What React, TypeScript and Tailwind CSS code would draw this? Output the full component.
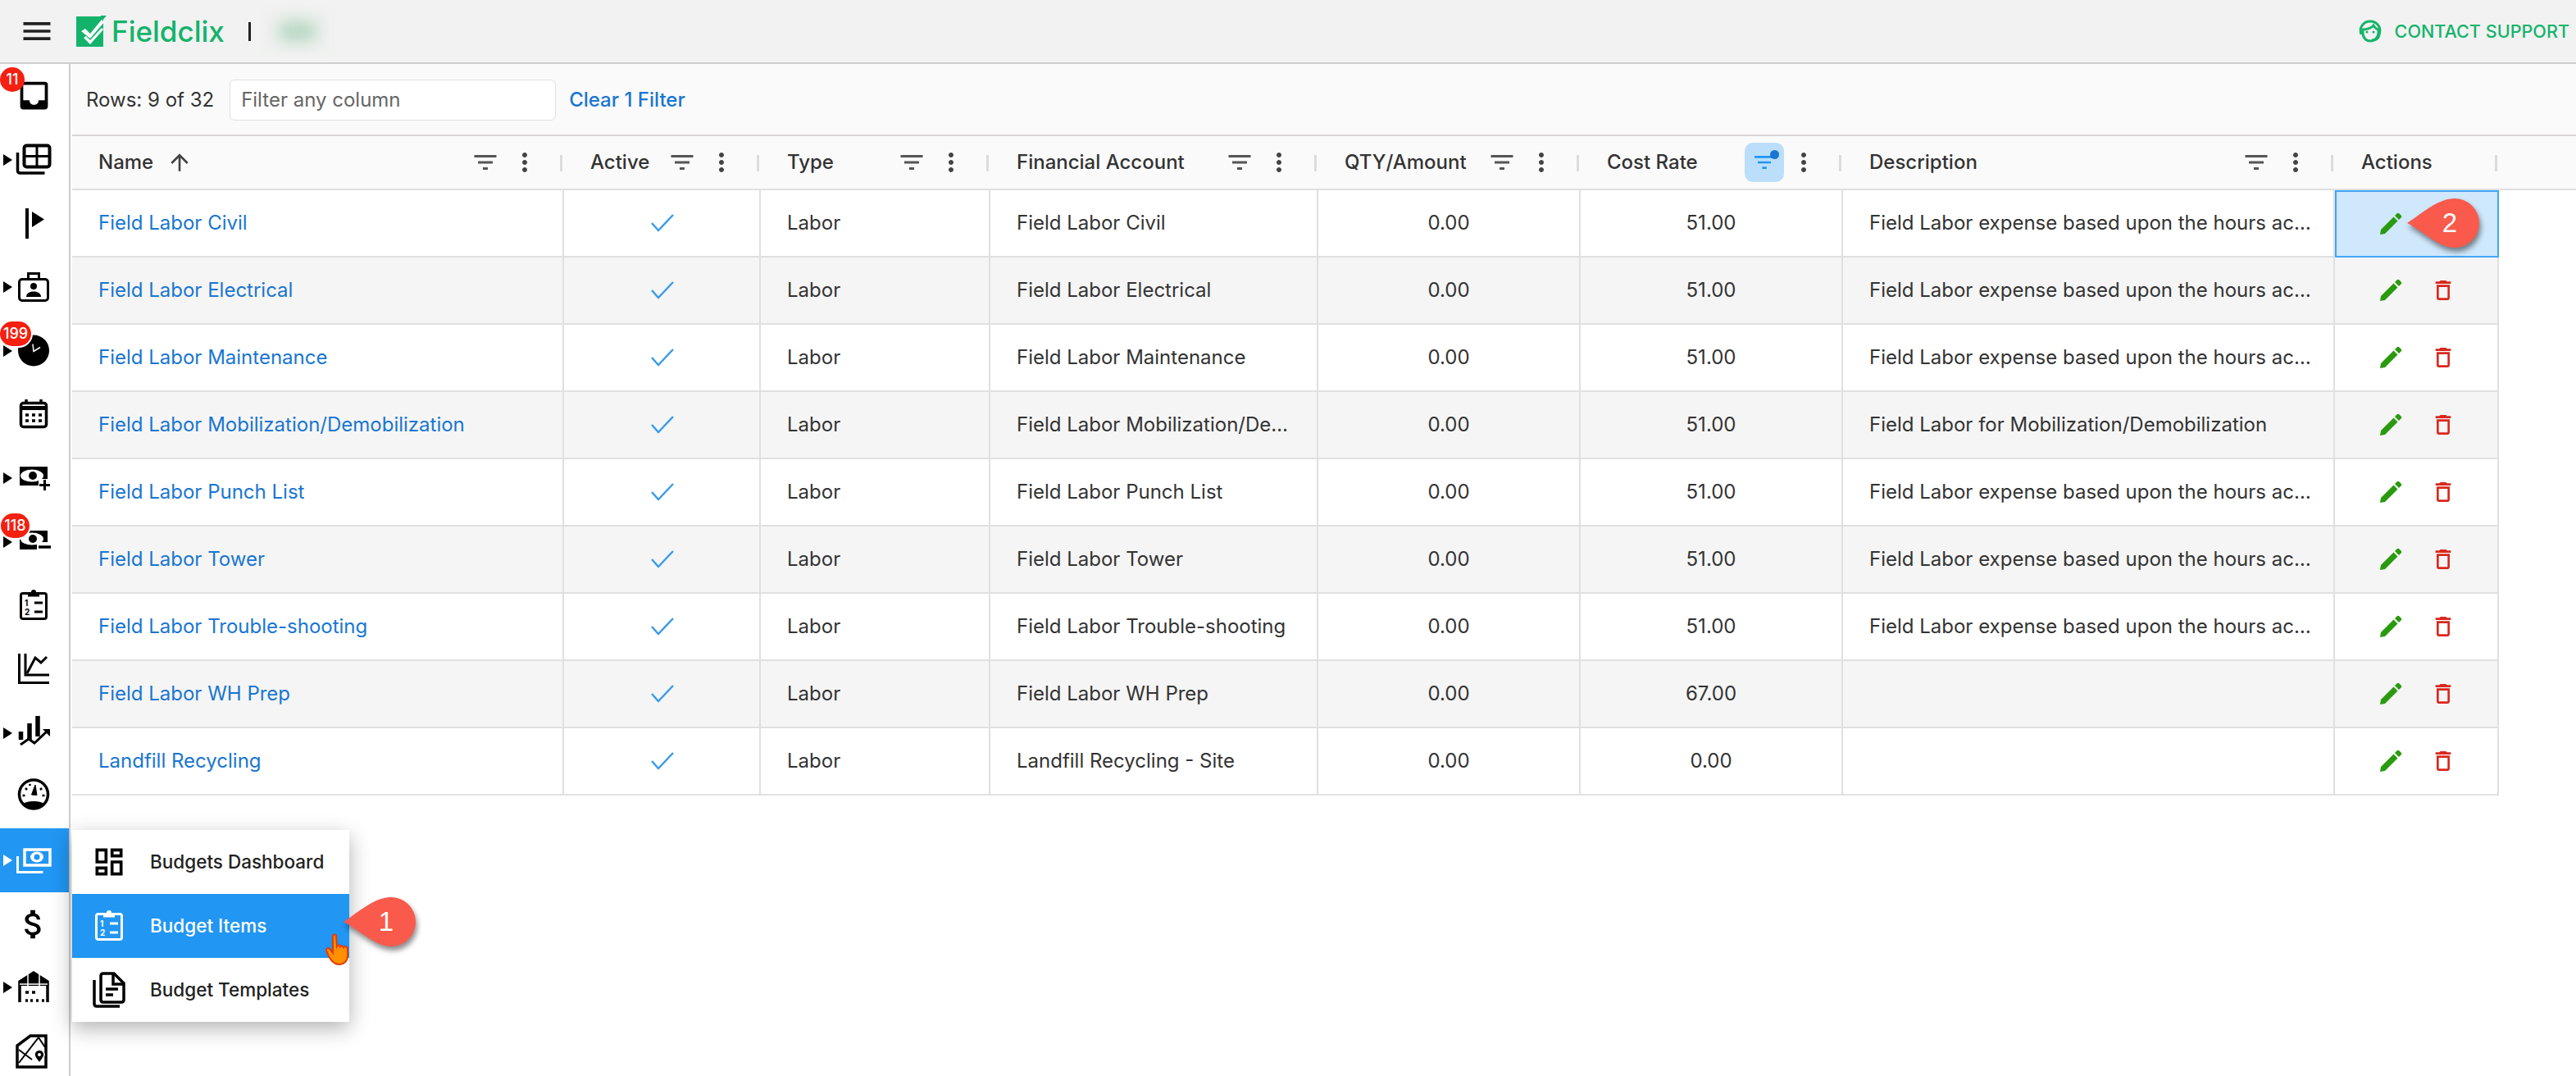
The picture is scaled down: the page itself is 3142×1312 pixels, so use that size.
import React from 'react';
import { MdMenu, MdInbox, MdFilterList, MdMoreVert, MdArrowUpward, MdOutlineDelete, MdOutlineAttachMoney, MdOutlineDashboard } from 'react-icons/md';

// --- sidebar drawings, 48x48 box ---
const Svg = ({ children, className = 'text-black' }: { children: React.ReactNode; className?: string }) => (
  <svg viewBox="0 0 48 48" className={`w-[48px] h-[48px] ${className}`} fill="none" stroke="currentColor" strokeWidth="3">
    {children}
  </svg>
);

const TableIcon = () => (
  <Svg>
    <rect x="12.500" y="6.500" width="31" height="26" rx="3" strokeWidth="4" />
    <path d="M12 19.500h32M28 6v27" strokeWidth="3" />
    <path d="M4.500 15v22c0 2 1 3 3 3h30" strokeWidth="3.500" />
  </Svg>
);
const FlagIcon = () => (
  <Svg>
    <path d="M16 6v37" strokeWidth="4" />
    <path d="M22 10l15 9.500-15 9.500z" fill="currentColor" stroke="none" />
  </Svg>
);
const BadgeIcon = () => (
  <Svg>
    <rect x="6.500" y="14.500" width="35" height="26" rx="3.500" strokeWidth="3" />
    <path d="M17.500 14V7.500h13V14" strokeWidth="3" />
    <circle cx="24" cy="23" r="4" fill="currentColor" stroke="none" />
    <path d="M15 36c0-5 5-6.500 9-6.500s9 1.500 9 6.500z" fill="currentColor" stroke="none" />
  </Svg>
);
const PieIcon = () => (
  <Svg>
    <circle cx="24" cy="23.500" r="19" fill="currentColor" stroke="none" />
    <path d="M23 15.500l1 9 8-5" stroke="#fff" strokeWidth="1.500" />
  </Svg>
);
const CalendarIcon = () => (
  <Svg>
    <rect x="8.500" y="10.500" width="31" height="29" rx="3" strokeWidth="3.500" />
    <path d="M8 14h32v5H8z" fill="currentColor" stroke="none" />
    <path d="M15 6v6M33 6v6" strokeWidth="3.500" />
    <path d="M14 25h4M22 25h4M30 25h4M14 32h4M22 32h4M30 32h4" strokeWidth="3.500" />
  </Svg>
);
const MoneyPlusIcon = () => (
  <Svg>
    <rect x="7" y="10" width="34" height="23" fill="currentColor" stroke="none" />
    <ellipse cx="22" cy="21" rx="14" ry="7.500" fill="#fff" stroke="none" />
    <circle cx="23" cy="21" r="5" fill="currentColor" stroke="none" />
    <path d="M30 25h18v19H30z" fill="#fff" stroke="none" />
    <path d="M37.500 26v13M31 32.500h13" strokeWidth="3" />
  </Svg>
);
const MoneyMinusIcon = () => (
  <Svg>
    <rect x="7" y="10" width="34" height="23" fill="currentColor" stroke="none" />
    <ellipse cx="22" cy="20" rx="14" ry="7.500" fill="#fff" stroke="none" />
    <circle cx="23" cy="20" r="5" fill="currentColor" stroke="none" />
    <path d="M28 24h20v12H28z" fill="#fff" stroke="none" />
    <path d="M30 30h15" strokeWidth="3.500" />
  </Svg>
);
const ClipboardIcon = ({ className }: { className?: string }) => (
  <Svg className={className}>
    <rect x="8.500" y="9.500" width="31" height="31" rx="2.500" strokeWidth="3" />
    <circle cx="24" cy="8" r="3" fill="currentColor" stroke="none" />
    <path d="M17 12h14" strokeWidth="3" />
    <path d="M25 21h10M25 32h10" strokeWidth="3" />
    <text x="13" y="25" fontSize="10" fontWeight="700" fontFamily="Inter, sans-serif" fill="currentColor" stroke="none">1</text>
    <text x="13" y="36" fontSize="10" fontWeight="700" fontFamily="Inter, sans-serif" fill="currentColor" stroke="none">2</text>
  </Svg>
);
const ChartIcon = () => (
  <Svg>
    <path d="M6.500 5v35.500H43M14 5v26h29" strokeWidth="3" />
    <path d="M16 29l10-19 7 6 7-7" strokeWidth="3" />
  </Svg>
);
const BarsIcon = () => (
  <Svg>
    <path d="M8.500 22v10M19 12v20M29 3v25" strokeWidth="5.500" />
    <path d="M8 38l10-7 7 5 15-14" strokeWidth="3" />
    <path d="M35 19h9v9z" fill="currentColor" stroke="none" />
  </Svg>
);
const GaugeIcon = () => (
  <Svg>
    <circle cx="24" cy="21.500" r="17.500" strokeWidth="3.500" />
    <path d="M10 34c3-3 8-4 14-4s11 1 14 4c-3 4-8 6-14 6s-11-2-14-6z" fill="currentColor" stroke="none" />
    <path d="M21.500 22l4.500-12 2 12.500z" fill="currentColor" stroke="currentColor" strokeWidth="1" />
    <path d="M14 14l2 2M34 14l-2 2M10.500 23h3M34.500 23h3M19 9l1 2" strokeWidth="2.500" />
  </Svg>
);
const BudgetStackIcon = () => (
  <Svg className="text-white">
    <rect x="13" y="11" width="31" height="19" strokeWidth="3.500" />
    <ellipse cx="28" cy="20" rx="8" ry="6.500" fill="currentColor" stroke="none" />
    <circle cx="28" cy="20" r="3.500" fill="#2196f3" stroke="none" />
    <path d="M4.500 19v19.500h31" strokeWidth="3" />
  </Svg>
);
const WarehouseIcon = () => (
  <Svg>
    <path d="M7 42V17L24 6l17 11v25" strokeWidth="3.500" />
    <path d="M6 17L24 5l18 12v5H6z" fill="currentColor" stroke="none" />
    <path d="M17 6v16M31 6v16M7 20h34" stroke="#fff" strokeWidth="1.500" />
    <path d="M14 30h4M22 30h4M14 40h3M20 40h3M27 40h3M34 40h3" strokeWidth="3.500" />
  </Svg>
);
const MapIcon = () => (
  <Svg>
    <path d="M4 17L20 5h19v38H4z" strokeWidth="3.500" />
    <path d="M6 38l24-31M6 22l16 12M30 7l8 12" strokeWidth="2" />
    <path d="M31 38c-4-5-6-7-6-10a6 6 0 0 1 12 0c0 3-2 5-6 10z" fill="currentColor" stroke="#fff" strokeWidth="1.500" />
    <circle cx="31" cy="28" r="2" fill="#fff" stroke="none" />
  </Svg>
);

// thin pencil of the actions column
const Pencil = () => (
  <svg viewBox="0 0 32 32" className="w-[32px] h-[32px] text-[#2a9a0e]" fill="currentColor">
    <path d="M3 29l1-6L19.500 7.500l5 5L9 28z" />
    <path d="M21 6l2.500-2.500c1-1 2-1 3 0l2 2c1 1 1 2 0 3L26 11z" />
  </svg>
);

const SIDE_ITEMS: { icon: React.ReactNode; arrow?: boolean; badge?: string; badgeClass?: string; active?: boolean }[] = [
  { icon: <span className="flex w-[48px] h-[48px] items-center justify-center"><MdInbox className="w-[45px] h-[45px] text-black" /></span>, badge: '11', badgeClass: 'top-[4px] w-[30px]' },
  { icon: <TableIcon />, arrow: true },
  { icon: <FlagIcon /> },
  { icon: <BadgeIcon />, arrow: true },
  { icon: <PieIcon />, arrow: true, badge: '199', badgeClass: 'top-[3px] w-[38px] ring-2 ring-white' },
  { icon: <CalendarIcon /> },
  { icon: <MoneyPlusIcon />, arrow: true },
  { icon: <MoneyMinusIcon />, arrow: true, badge: '118', badgeClass: 'top-[4px] left-[1px] w-[35px] ring-2 ring-white' },
  { icon: <ClipboardIcon /> },
  { icon: <ChartIcon /> },
  { icon: <BarsIcon />, arrow: true },
  { icon: <GaugeIcon /> },
  { icon: <BudgetStackIcon />, arrow: true, active: true },
  { icon: <span className="flex w-[48px] h-[48px] items-center justify-center"><MdOutlineAttachMoney className="w-[46px] h-[46px] text-black" /></span> },
  { icon: <WarehouseIcon />, arrow: true },
  { icon: <MapIcon /> },
];

const EXPENSE = 'Field Labor expense based upon the hours actually worked';

const ROWS = [
  { name: 'Field Labor Civil', account: 'Field Labor Civil', cost: '51.00', desc: EXPENSE },
  { name: 'Field Labor Electrical', account: 'Field Labor Electrical', cost: '51.00', desc: EXPENSE },
  { name: 'Field Labor Maintenance', account: 'Field Labor Maintenance', cost: '51.00', desc: EXPENSE },
  { name: 'Field Labor Mobilization/Demobilization', account: 'Field Labor Mobilization/Demobilization', cost: '51.00', desc: 'Field Labor for Mobilization/Demobilization' },
  { name: 'Field Labor Punch List', account: 'Field Labor Punch List', cost: '51.00', desc: EXPENSE },
  { name: 'Field Labor Tower', account: 'Field Labor Tower', cost: '51.00', desc: EXPENSE },
  { name: 'Field Labor Trouble-shooting', account: 'Field Labor Trouble-shooting', cost: '51.00', desc: EXPENSE },
  { name: 'Field Labor WH Prep', account: 'Field Labor WH Prep', cost: '67.00', desc: '' },
  { name: 'Landfill Recycling', account: 'Landfill Recycling - Site', cost: '0.00', desc: '' },
];

const GRID = 'grid grid-cols-[600px_240px_280px_400px_320px_320px_600px_200px]';
const FONT = "font-['Inter',_'Liberation_Sans',_sans-serif]";

// callout teardrop with its number
const Callout = ({ n, className }: { n: string; className: string }) => (
  <div className={`absolute ${className}`}>
    <svg viewBox="0 0 88 60" className="w-full h-full drop-shadow-[2px_5px_3px_rgba(0,0,0,0.45)]">
      <path d="M0 30C20 17 38 0 58 0a30 30 0 0 1 0 60C38 60 20 40 0 30z" fill="#f95a4c" />
    </svg>
    <span className="absolute left-[40px] top-0 w-[24px] h-full flex items-center justify-center text-white text-[33px] font-['Liberation_Sans',_sans-serif]">{n}</span>
  </div>
);

const HeaderCell = ({ label, sort, filtered, noIcons }: { label: string; sort?: boolean; filtered?: boolean; noIcons?: boolean }) => (
  <div className="relative flex items-center pl-[32px] pr-[30px] h-full">
    <span className="text-[24px] font-medium text-[#333] whitespace-nowrap">{label}</span>
    {sort && <MdArrowUpward className="ml-[16px] w-[32px] h-[32px] text-[#444]" />}
    <div className="flex-1" />
    {!noIcons && (
      filtered ? (
        <div className="relative w-[48px] h-[48px] rounded-[10px] bg-[#bbdefb] flex items-center justify-center mr-[6px]">
          <MdFilterList className="w-[32px] h-[32px] text-[#2196f3]" />
          <span className="absolute top-[9px] right-[6px] w-[11px] h-[11px] rounded-full bg-[#1976d2]" />
        </div>
      ) : (
        <MdFilterList className="w-[36px] h-[36px] text-[#555] mr-[12px]" />
      )
    )}
    {!noIcons && <MdMoreVert className="w-[36px] h-[36px] text-[#444]" />}
    <span className="absolute right-[2px] top-[23px] w-[3px] h-[20px] bg-[#dcdcdc]" />
  </div>
);

export default function App() {
  return (
    <div className={`h-[1312px] w-[3142px] overflow-hidden bg-white relative flex flex-col ${FONT}`}>
      {/* top bar */}
      <header className="h-[78px] flex-shrink-0 bg-[#f2f2f2] border-b-2 border-[#cfcfcf] flex items-center">
        <MdMenu className="ml-[23px] w-[44px] h-[44px] text-[#222]" />
        <svg viewBox="0 0 40 38" className="ml-[26px] w-[40px] h-[38px]">
          <path d="M0 1h33v3l-8 10-0 0 8-9v33H0z" fill="#14b36b" />
          <path d="M30 0h7L24 15z" fill="#14b36b" />
          <path d="M6 19l5-3 6 6L31 5l3 3-17 20z" fill="#fff" />
          <path d="M9 27l3-2 5 5 14-15 2 2-16 18z" fill="#fff" />
        </svg>
        <span className="ml-[3px] text-[35px] font-medium text-[#14b36b] leading-none">Fieldclix</span>
        <span className="ml-[29px] w-[3px] h-[23px] bg-[#222]" />
        <div className="ml-[15px] w-[84px] h-[56px] flex items-center justify-center bg-[#eff1ef] blur-[2px]">
          <div className="w-[48px] h-[24px] rounded-full bg-[#b5d6c0] blur-[9px]" />
        </div>
        <div className="flex-1" />
        <svg viewBox="0 0 30 30" className="w-[30px] h-[30px] text-[#14b36b]" fill="none" stroke="currentColor">
          <path d="M4 19C1 10 7 3 15 3s14 7 11 16" strokeWidth="3" />
          <path d="M6 13c5 0 11-2 13-5 2 3 4 5 6 5v4c0 6-5 10-10 10S6 23 6 17z" strokeWidth="3" />
          <circle cx="11" cy="16" r="1.500" fill="currentColor" stroke="none" />
          <circle cx="19" cy="16" r="1.500" fill="currentColor" stroke="none" />
          <path d="M26 18c0 6-4 8-9 8" strokeWidth="3" />
        </svg>
        <span className="ml-[15px] mr-[8px] text-[21.6px] font-medium text-[#14b36b] whitespace-nowrap">CONTACT SUPPORT</span>
      </header>

      <div className="flex flex-1 min-h-0">
        {/* sidebar */}
        <aside className="w-[86px] flex-shrink-0 border-r-2 border-[#cccccc] flex flex-col">
          {SIDE_ITEMS.map((item, i) => (
            <div key={i} className={`relative h-[77.7px] flex-shrink-0 flex items-center pl-[4px] ${item.active ? 'bg-[#2196f3]' : ''}`}>
              <span className="w-[11px] flex-shrink-0">
                {item.arrow && (
                  <svg viewBox="0 0 11 14" className={`w-[11px] h-[14px] ${item.active ? 'text-white' : 'text-black'}`}>
                    <path d="M0 0l11 7-11 7z" fill="currentColor" />
                  </svg>
                )}
              </span>
              <span className="ml-[2px]">{item.icon}</span>
              {item.badge && (
                <span className={`absolute left-0 h-[30px] rounded-full bg-[#f42010] text-white text-[18px] font-medium leading-none flex items-center justify-center ${item.badgeClass}`}>
                  {item.badge}
                </span>
              )}
            </div>
          ))}
        </aside>

        {/* main */}
        <main className="flex-1 min-w-0 pl-[2px] flex flex-col">
          <div className="h-[88px] flex-shrink-0 bg-[#fafafa] border-b-2 border-[#d9d5d5] flex items-center pl-[17px] pt-[2px]">
            <span className="text-[24px] text-[#333]">Rows: 9 of 32</span>
            <div className="ml-[19px] w-[398px] h-[50px] rounded-[6px] border border-[#e0e0e0] bg-white flex items-center pl-[13px] text-[24px] text-[#666]">
              Filter any column
            </div>
            <span className="ml-[16px] text-[24px] font-medium text-[#1976d2]">Clear 1 Filter</span>
          </div>

          <div className="h-[66px] flex-shrink-0 bg-[#fafafa] border-b-2 border-[#e0e0e0]">
            <div className={`${GRID} h-full`}>
              <HeaderCell label="Name" sort />
              <HeaderCell label="Active" />
              <HeaderCell label="Type" />
              <HeaderCell label="Financial Account" />
              <HeaderCell label="QTY/Amount" />
              <HeaderCell label="Cost Rate" filtered />
              <HeaderCell label="Description" />
              <HeaderCell label="Actions" noIcons />
            </div>
          </div>

          {ROWS.map((row, i) => (
            <div key={row.name} className={`${GRID} w-[2960px] h-[82px] flex-shrink-0 text-[24px] text-[#333] ${i % 2 ? 'bg-[#f5f5f5]' : 'bg-white'}`}>
              <div className="border-b-2 border-r-2 border-[#e0e0e0] flex items-center pl-[32px] pr-[8px] text-[#1976d2] whitespace-nowrap">{row.name}</div>
              <div className="border-b-2 border-r-2 border-[#e0e0e0] flex items-center justify-center pl-[2px]">
                <svg viewBox="0 0 28 22" className="w-[28px] h-[22px] text-[#3a9be8]" fill="none" stroke="currentColor" strokeWidth="2.500">
                  <path d="M1 11l8 9L27 1" />
                </svg>
              </div>
              <div className="border-b-2 border-r-2 border-[#e0e0e0] flex items-center pl-[32px]">Labor</div>
              <div className="border-b-2 border-r-2 border-[#e0e0e0] flex items-center pl-[32px] pr-[26px] min-w-0"><span className="truncate">{row.account}</span></div>
              <div className="border-b-2 border-r-2 border-[#e0e0e0] flex items-center justify-center">0.00</div>
              <div className="border-b-2 border-r-2 border-[#e0e0e0] flex items-center justify-center">{row.cost}</div>
              <div className="border-b-2 border-r-2 border-[#e0e0e0] flex items-center pl-[32px] pr-[20px] min-w-0"><span className="truncate">{row.desc}</span></div>
              {i === 0 ? (
                <div className="border-2 border-[#42a5f5] bg-[#cfe8fc] flex items-center pl-[50px]">
                  <Pencil />
                </div>
              ) : (
                <div className="border-b-2 border-r-2 border-[#e0e0e0] flex items-center pl-[52px] gap-[32px]">
                  <Pencil />
                  <MdOutlineDelete className="w-[32px] h-[32px] text-[#d9281e]" />
                </div>
              )}
            </div>
          ))}
        </main>
      </div>

      {/* flyout menu */}
      <div className="absolute left-[88px] top-[1012px] w-[338px] bg-white shadow-[0_8px_24px_rgba(0,0,0,0.3)]">
        <div className="h-[78px] flex items-center pl-[28px] text-[22.5px] font-medium text-[#222]">
          <MdOutlineDashboard className="w-[44px] h-[44px] -ml-[5px] mr-[28px] text-black" />
          Budgets Dashboard
        </div>
        <div className="h-[78px] flex items-center pl-[28px] text-[22.5px] font-medium text-white bg-[#2196f3]">
          <span className="-ml-[7px] mr-[26px]"><ClipboardIcon className="text-white" /></span>
          Budget Items
        </div>
        <div className="h-[78px] flex items-center pl-[28px] text-[22.5px] font-medium text-[#222]">
          <svg viewBox="0 0 48 48" className="w-[48px] h-[48px] -ml-[7px] mr-[26px] text-black" fill="none" stroke="currentColor" strokeWidth="3.500">
            <path d="M6 12v29c0 2 1 3 3 3h28" />
            <path d="M14 7c0-2 1-3 3-3h13l12 12v20c0 2-1 3-3 3H17c-2 0-3-1-3-3z" />
            <path d="M29 4v13h13M20 23h15M20 30h9" />
          </svg>
          Budget Templates
        </div>
      </div>

      <Callout n="1" className="left-[419px] top-[1094px] w-[88px] h-[60px]" />
      <Callout n="2" className="left-[2936px] top-[242px] w-[88px] h-[60px]" />

      {/* hand cursor */}
      <svg viewBox="0 0 30 40" className="absolute left-[397px] top-[1138px] w-[30px] h-[40px]">
        <path d="M9 3c1-2 4-2 4 1l1 12c1-2 4-2 4 0 1-1 4-1 4 1 1-1 5-1 5 2v9c0 6-5 10-10 10-6 0-10-4-13-10l-3-7c-1-2 2-4 4-2l4 5z" fill="#ff9000" stroke="#e83a00" strokeWidth="2" />
      </svg>
    </div>
  );
}
